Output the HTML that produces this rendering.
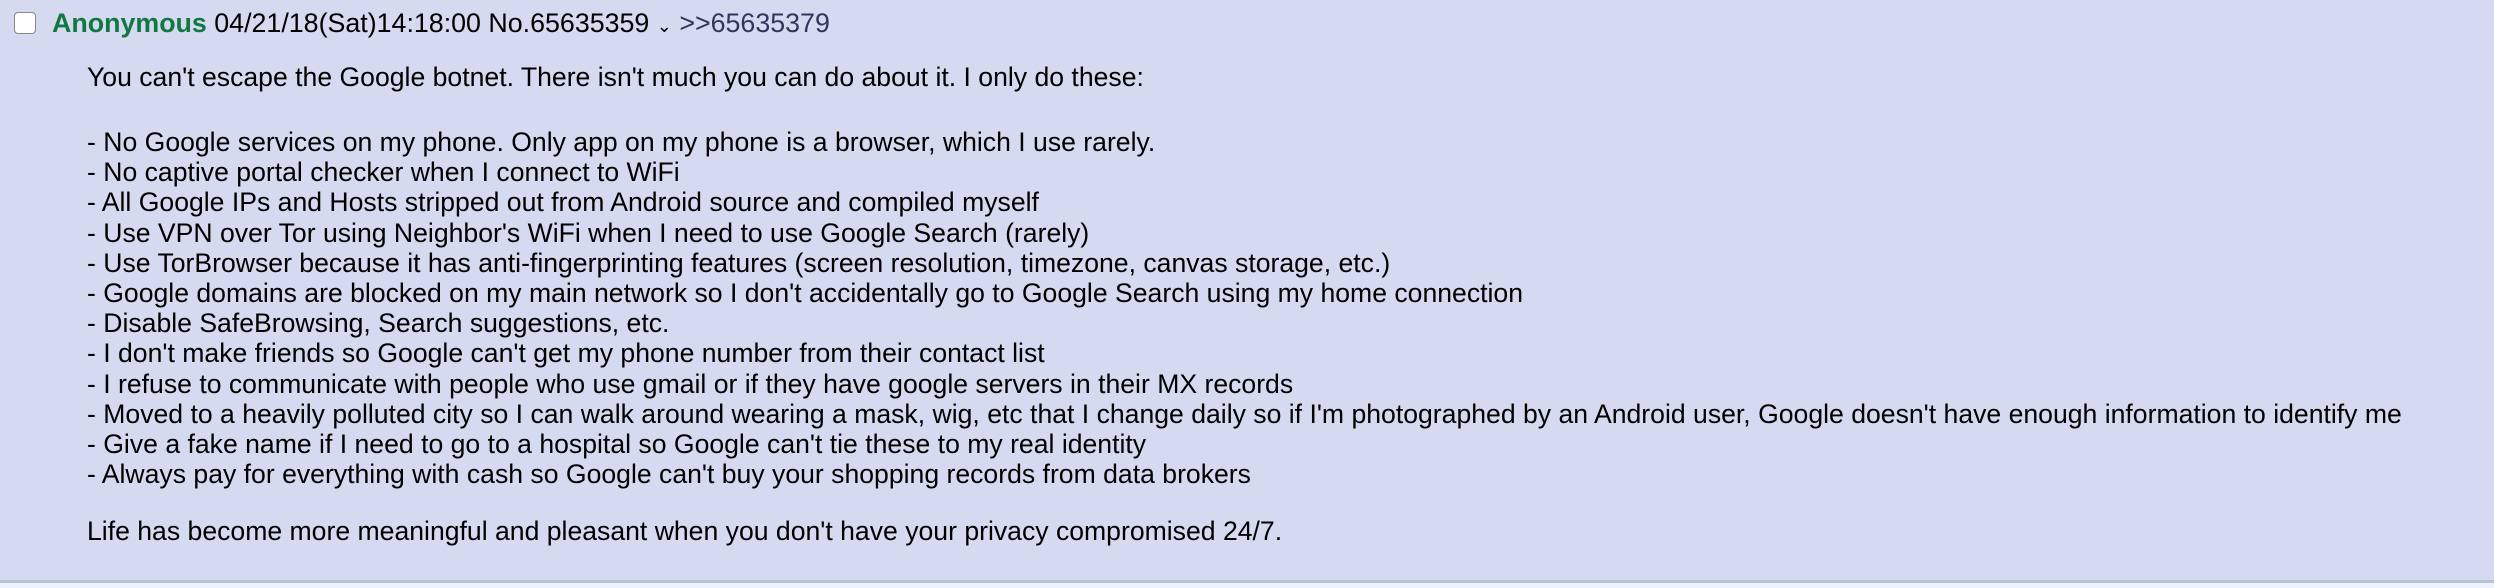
<!DOCTYPE html>
<html><head><meta charset="utf-8"><style>
html,body{margin:0;padding:0;width:2494px;height:588px;background:#eef2ff;overflow:hidden}
.post{position:absolute;left:0;top:0;width:2494px;height:580px;background:#d6daf0;border-bottom:3px solid #b7c5d9;font-family:"Liberation Sans",Arial,sans-serif;color:#000}
.cb{position:absolute;left:14px;top:12px;width:20px;height:20px;border:1px solid #888;border-radius:4px;background:#fff}
.hdr{position:absolute;left:52px;top:8px;font-size:26.8px;line-height:30px;white-space:nowrap}
.name{color:#117743;font-weight:bold}
.q{color:#34345c}
.b{position:absolute;left:87px;font-size:26.6px;line-height:30.2px;white-space:pre}
</style></head><body>
<div class="post">
<div class="cb"></div>
<div class="hdr"><span class="name">Anonymous</span> 04/21/18(Sat)14:18:00 No.65635359 <span style="font-size:18px">&#8964;</span> <span class="q">&gt;&gt;65635379</span></div>
<div class="b" style="top:62px">You can't escape the Google botnet. There isn't much you can do about it. I only do these:</div>
<div class="b" style="top:127px">- No Google services on my phone. Only app on my phone is a browser, which I use rarely.
- No captive portal checker when I connect to WiFi
- All Google IPs and Hosts stripped out from Android source and compiled myself
- Use VPN over Tor using Neighbor's WiFi when I need to use Google Search (rarely)
- Use TorBrowser because it has anti-fingerprinting features (screen resolution, timezone, canvas storage, etc.)
- Google domains are blocked on my main network so I don't accidentally go to Google Search using my home connection
- Disable SafeBrowsing, Search suggestions, etc.
- I don't make friends so Google can't get my phone number from their contact list
- I refuse to communicate with people who use gmail or if they have google servers in their MX records
- Moved to a heavily polluted city so I can walk around wearing a mask, wig, etc that I change daily so if I'm photographed by an Android user, Google doesn't have enough information to identify me
- Give a fake name if I need to go to a hospital so Google can't tie these to my real identity
- Always pay for everything with cash so Google can't buy your shopping records from data brokers</div>
<div class="b" style="top:516px">Life has become more meaningful and pleasant when you don't have your privacy compromised 24/7.</div>
</div>
</body></html>
